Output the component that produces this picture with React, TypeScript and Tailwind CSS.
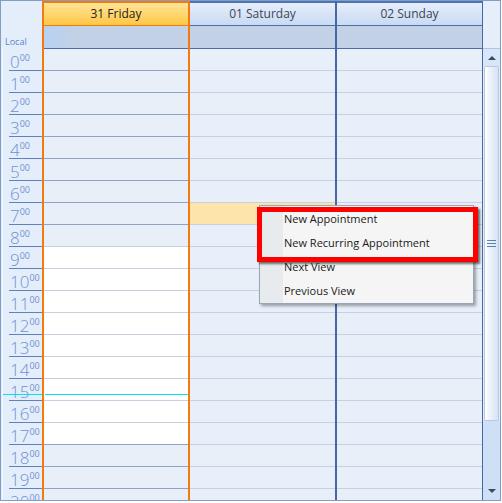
import React from "react";

const hours = Array.from({ length: 21 }, (_, i) => i);

function isWork(h: number) {
  return h >= 9 && h <= 17;
}

function FridayRows() {
  return (
    <>
      {hours.map((h) => {
        const next = h + 1;
        const bg = isWork(h) ? "bg-white" : "bg-[#e8eff9]";
        const line = isWork(next) ? "border-[#c9cfdc]" : "border-[#8fa3c8]";
        return <div key={h} className={`h-[22px] shrink-0 border-b ${bg} ${line}`} />;
      })}
    </>
  );
}

function WeekendRows({ selected }: { selected?: number }) {
  return (
    <>
      {hours.map((h) => (
        <div
          key={h}
          className={`h-[22px] shrink-0 border-b border-[#c6d0e4] ${
            selected === h ? "bg-[#fde4ab]" : "bg-[#e8eff9]"
          }`}
        />
      ))}
    </>
  );
}

export default function App() {
  return (
    <div className="w-[502px] h-[503px] bg-white font-['Open_Sans',sans-serif]">
      <div className="relative w-[501px] h-[501px] border border-[#7f9dc9] bg-[#e4edfa] flex overflow-hidden">
        {/* time column */}
        <div className="w-[41px] shrink-0 flex flex-col">
          <div className="h-[48px] shrink-0 flex items-end pl-[4px] pb-[2px]">
            <span className="text-[9px] leading-[11px] text-[#5a86cc]">Local</span>
          </div>
          {hours.map((h) => (
            <div key={h} className="h-[22px] shrink-0 pl-[6px] border-l border-[#f4f8fe] ml-[1px]">
              <div className="h-full border-b border-[#5f82bf] flex items-start pl-[1px] text-[#6f92d2]">
                <span className="text-[17px] leading-[20px] mt-[3px] font-light">{h}</span>
                <span className="text-[9px] leading-[9px] mt-[4px]">00</span>
              </div>
            </div>
          ))}
        </div>

        {/* Friday */}
        <div className="w-[148px] shrink-0 flex flex-col border-x-2 border-[#f47a10] bg-[#e8eff9]">
          <div className="h-[25px] shrink-0 border-t-2 border-b border-[#f47a10] bg-gradient-to-b from-[#ffe493] to-[#ffc742] flex items-center justify-center text-[12px] text-[#222]">
            31 Friday
          </div>
          <div className="h-[23px] shrink-0 border-b border-[#4b6ea8] bg-gradient-to-r from-[#b6d2f3] via-[#c2d1e6] via-[20%] to-[#c2d1e6]" />
          <FridayRows />
        </div>

        {/* Saturday */}
        <div className="w-[147px] shrink-0 flex flex-col border-r-2 border-[#4468aa] bg-[#e8eff9]">
          <div className="h-[25px] shrink-0 border-t-2 border-t-[#4f74b3] border-b border-b-[#4b6ea8] bg-gradient-to-b from-[#e6eefb] to-[#c9daf2] flex items-center justify-center text-[12px] text-[#3b4556]">
            01 Saturday
          </div>
          <div className="h-[23px] shrink-0 border-b border-[#4b6ea8] bg-[#c2d1e6]" />
          <WeekendRows selected={7} />
        </div>

        {/* Sunday */}
        <div className="w-[145px] shrink-0 flex flex-col bg-[#e8eff9]">
          <div className="h-[25px] shrink-0 border-t-2 border-t-[#4f74b3] border-b border-b-[#4b6ea8] bg-gradient-to-b from-[#e6eefb] to-[#c9daf2] flex items-center justify-center text-[12px] text-[#3b4556]">
            02 Sunday
          </div>
          <div className="h-[23px] shrink-0 border-b border-[#4b6ea8] bg-[#c2d1e6]" />
          <WeekendRows />
        </div>

        {/* scrollbar */}
        <div className="w-[18px] shrink-0 flex flex-col border-l border-[#4468aa]">
          <div className="h-[48px] shrink-0 bg-[#e6eefa] border-b border-[#aec3e2]" />
          <div className="h-[17px] shrink-0 bg-[#d9e6f7] flex items-center justify-center">
            <svg width="8" height="5" viewBox="0 0 8 5">
              <path d="M0 5 L4 1 L8 5 Z" fill="#3b4a63" />
            </svg>
          </div>
          <div className="h-[355px] shrink-0 mx-[1px] border border-[#b8c8df] rounded-[1px] bg-gradient-to-r from-white via-[#eaf1fb] via-[45%] to-[#d5e3f5] flex items-center justify-center">
            <svg width="9" height="7" viewBox="0 0 9 7">
              <rect x="0" y="0" width="9" height="1" fill="#5d7fb8" />
              <rect x="0" y="3" width="9" height="1" fill="#5d7fb8" />
              <rect x="0" y="6" width="9" height="1" fill="#5d7fb8" />
            </svg>
          </div>
          <div className="flex-1 bg-[#cde0f6]" />
          <div className="h-[18px] shrink-0 bg-[#cde0f6] flex items-center justify-center">
            <svg width="8" height="5" viewBox="0 0 8 5">
              <path d="M0 0 L8 0 L4 4 Z" fill="#3b4a63" />
            </svg>
          </div>
        </div>

        {/* current time line */}
        <div className="absolute left-[2px] top-[393px] w-[39px] h-[1px] bg-[#00e4f2]" />
        <div className="absolute left-[44px] top-[393px] w-[143px] h-[1px] bg-[#00e4f2]" />

        {/* context menu */}
        <div className="absolute left-[258px] top-[204px] w-[215px] h-[99px] bg-[#f5f5f5] border border-[#9aa6b8] shadow-[2px_2px_3px_rgba(0,0,0,0.35)] flex">
          <div className="w-[23px] shrink-0 bg-[#e7ebee]" />
          <div className="flex-1 pt-[1px] pl-[1px] text-[11px] text-[#1a1a1a]">
            <div className="h-[24px] flex items-center">New Appointment</div>
            <div className="h-[24px] flex items-center">New Recurring Appointment</div>
            <div className="h-[24px] flex items-center">Next View</div>
            <div className="h-[24px] flex items-center">Previous View</div>
          </div>
        </div>

        {/* red highlight */}
        <div className="absolute left-[256px] top-[206px] w-[221px] h-[55px] border-[5px] border-[#ff0000] shadow-[2px_2px_2px_rgba(0,0,0,0.55)]" />
      </div>
    </div>
  );
}
